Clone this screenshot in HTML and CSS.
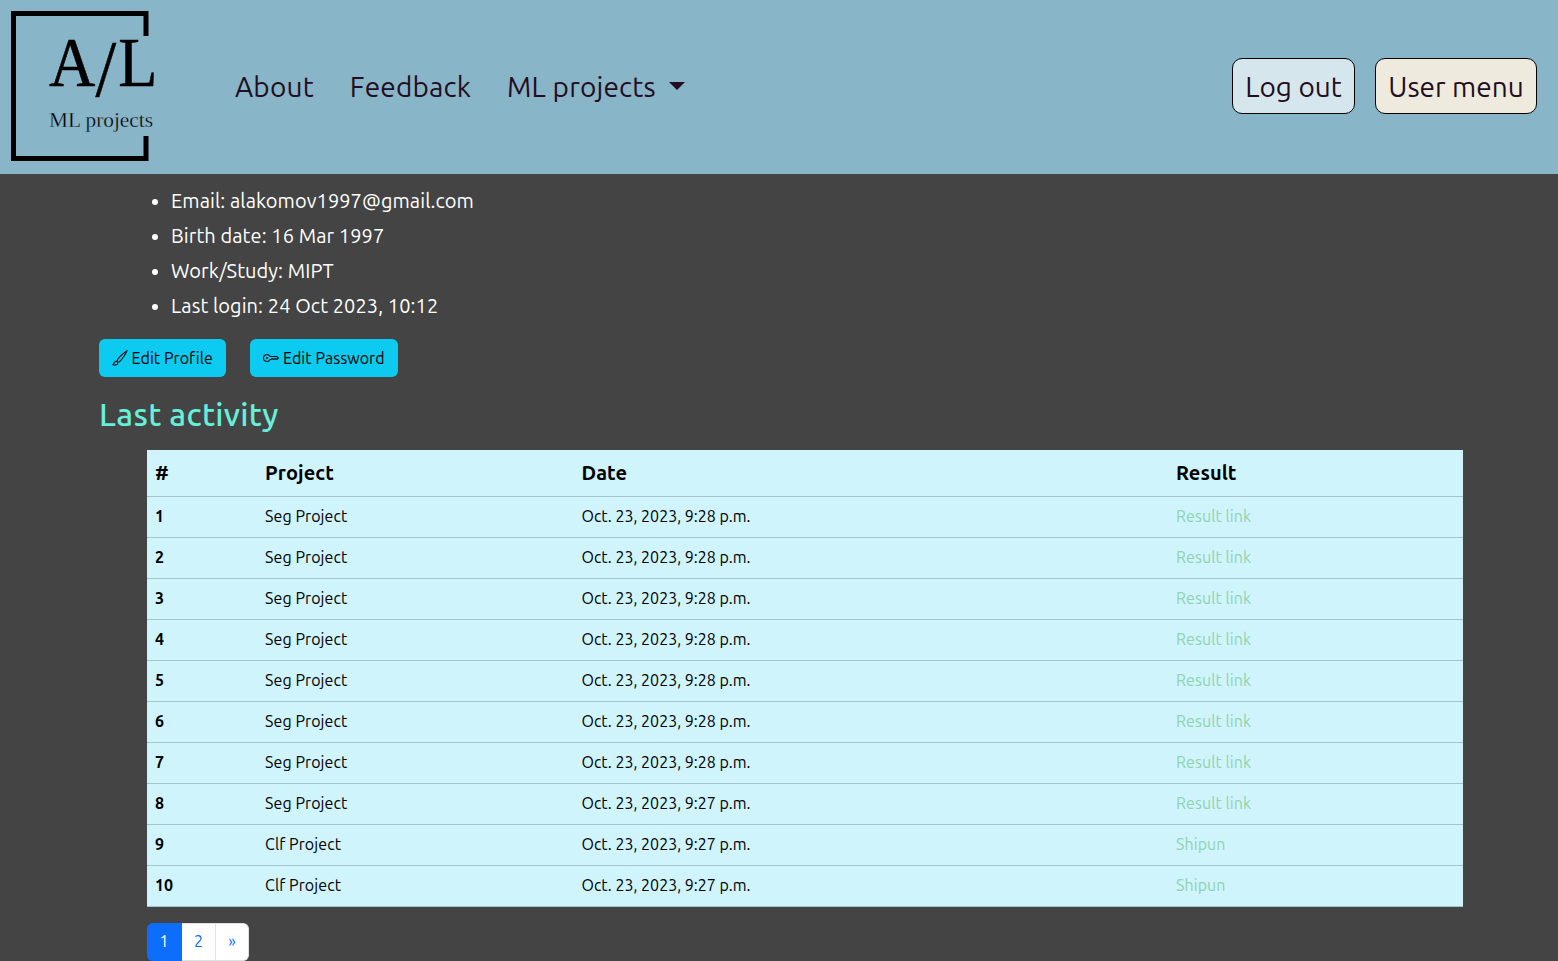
FILE: index.html
```html
<!DOCTYPE html>
<html lang="en">
<head>
<meta charset="utf-8">
<title>ML projects</title>
<link rel="stylesheet" href="styles.css">
</head>
<body>
<header class="navbar">
  <svg class="logo" width="160" height="174" viewBox="0 0 160 174">
    <path d="M146 36V13.500H13.500V158.500H146V136" fill="none" stroke="#000" stroke-width="5"/>
    <text class="logo-title" transform="translate(49 86) scale(.93 1)">A<tspan class="logo-slash" x="50" dy="10">/</tspan><tspan x="74.500" dy="-10">L</tspan></text>
    <text class="logo-sub" x="49" y="127" textLength="104" lengthAdjust="spacingAndGlyphs">ML projects</text>
  </svg>
  <nav class="links">
    <a>About</a>
    <a>Feedback</a>
    <a>ML projects<span class="caret"></span></a>
  </nav>
  <div class="account">
    <a class="acc logout">Log out</a>
    <a class="acc user">User menu</a>
  </div>
</header>
<main class="content">
  <ul class="info">
    <li>Email: alakomov1997@gmail.com</li>
    <li>Birth date: 16 Mar 1997</li>
    <li>Work/Study: MIPT</li>
    <li>Last login: 24 Oct 2023, 10:12</li>
  </ul>
  <div class="actions">
    <a class="btn profile"><svg width="16" height="16" viewBox="0 0 16 16" fill="currentColor"><path d="M15.825.12a.5.5 0 0 1 .132.584c-1.53 3.430-4.743 8.170-7.095 10.640a6.100 6.100 0 0 1-2.373 1.534c-.018.227-.06.538-.16.868-.201.659-.667 1.479-1.708 1.740a8.100 8.100 0 0 1-3.078.132 4 4 0 0 1-.562-.135 1.400 1.400 0 0 1-.466-.247.700.700 0 0 1-.204-.288.620.620 0 0 1 .004-.443c.095-.245.316-.38.461-.452.394-.197.625-.453.867-.826.095-.144.184-.297.287-.472l.117-.198c.151-.255.326-.54.546-.848.528-.739 1.201-.925 1.746-.896q.19.012.348.048c.062-.172.142-.38.238-.608.261-.619.658-1.419 1.187-2.069 2.176-2.670 6.180-6.206 9.117-8.104a.5.5 0 0 1 .596.040M4.705 11.912a1.200 1.200 0 0 0-.419-.1c-.246-.013-.573.050-.879.479-.197.275-.355.532-.5.777l-.105.177c-.106.181-.213.362-.32.528a3.400 3.400 0 0 1-.76.861c.69.112 1.736.111 2.657-.12.559-.139.843-.569.993-1.060a3 3 0 0 0 .126-.75zm1.440.026c.12-.04.277-.1.458-.183a5.100 5.100 0 0 0 1.535-1.100c1.900-1.996 4.412-5.570 6.052-8.631-2.590 1.927-5.566 4.660-7.302 6.792-.442.543-.795 1.243-1.042 1.826-.121.288-.214.540-.275.720v.001l.575.575zm-4.973 3.040.007-.005zm3.582-3.043.002.001h-.002z"/></svg><span>Edit Profile</span></a>
    <a class="btn password"><svg width="16" height="16" viewBox="0 0 16 16" fill="currentColor"><path d="M0 8a4 4 0 0 1 7.465-2H14a.5.5 0 0 1 .354.146l1.500 1.500a.5.5 0 0 1 0 .708l-1.500 1.500a.5.5 0 0 1-.708 0L13 9.207l-.646.647a.5.5 0 0 1-.708 0L11 9.207l-.646.647a.5.5 0 0 1-.708 0L9 9.207l-.646.647A.5.5 0 0 1 8 10h-.535A4 4 0 0 1 0 8m4-3a3 3 0 1 0 2.712 4.285A.5.5 0 0 1 7.163 9h.63l.853-.854a.5.5 0 0 1 .708 0l.646.647.646-.647a.5.5 0 0 1 .708 0l.646.647.646-.647a.5.5 0 0 1 .708 0l.646.647.793-.793-1-1h-6.630a.5.5 0 0 1-.451-.285A3 3 0 0 0 4 5"/><circle cx="4" cy="8" r="1"/></svg><span>Edit Password</span></a>
  </div>
  <h2 class="heading">Last activity</h2>
  <table class="activity">
    <thead><tr><th class="c-num">#</th><th class="c-project">Project</th><th class="c-date">Date</th><th>Result</th></tr></thead>
    <tbody>
      <tr><th>1</th><td>Seg Project</td><td class="date">Oct. 23, 2023, 9:28 p.m.</td><td><a>Result link</a></td></tr>
      <tr><th>2</th><td>Seg Project</td><td class="date">Oct. 23, 2023, 9:28 p.m.</td><td><a>Result link</a></td></tr>
      <tr><th>3</th><td>Seg Project</td><td class="date">Oct. 23, 2023, 9:28 p.m.</td><td><a>Result link</a></td></tr>
      <tr><th>4</th><td>Seg Project</td><td class="date">Oct. 23, 2023, 9:28 p.m.</td><td><a>Result link</a></td></tr>
      <tr><th>5</th><td>Seg Project</td><td class="date">Oct. 23, 2023, 9:28 p.m.</td><td><a>Result link</a></td></tr>
      <tr><th>6</th><td>Seg Project</td><td class="date">Oct. 23, 2023, 9:28 p.m.</td><td><a>Result link</a></td></tr>
      <tr><th>7</th><td>Seg Project</td><td class="date">Oct. 23, 2023, 9:28 p.m.</td><td><a>Result link</a></td></tr>
      <tr><th>8</th><td>Seg Project</td><td class="date">Oct. 23, 2023, 9:27 p.m.</td><td><a>Result link</a></td></tr>
      <tr><th>9</th><td>Clf Project</td><td class="date">Oct. 23, 2023, 9:27 p.m.</td><td><a>Shipun</a></td></tr>
      <tr><th>10</th><td>Clf Project</td><td class="date">Oct. 23, 2023, 9:27 p.m.</td><td><a>Shipun</a></td></tr>
    </tbody>
  </table>
  <div class="pagination"><a class="page active">1</a><a class="page">2</a><a class="page last">»</a></div>
</main>
</body>
</html>
```
FILE: styles.css
```css
* { box-sizing: border-box; }
body {
  margin: 0;
  height: 961px;
  overflow: hidden;
  background: #444;
  color: #fff;
  font-family: Ubuntu, "Noto Sans", sans-serif;
  font-size: 16px;
  line-height: 24px;
}
.navbar {
  display: flex;
  align-items: center;
  height: 174px;
  padding-right: 21px;
  background: #88b5c8;
  color: #230d21;
  font-size: 28px;
  line-height: 42px;
}
.logo { flex: none; }
.logo-title {
  font-family: "Liberation Serif", serif;
  font-size: 69px;
  stroke: #000;
  stroke-width: 0.5px;
}
.logo-slash { font-size: 80px; }
.logo-sub {
  font-family: "Liberation Serif", serif;
  font-size: 22px;
  stroke: #88b5c8;
  stroke-width: 0.35px;
}
.links { display: flex; gap: 36px; margin-left: 75px; letter-spacing: 0.17px; }
.links a { white-space: nowrap; }
.caret {
  display: inline-block;
  margin-left: 13px;
  vertical-align: 7px;
  border-top: 8px solid;
  border-left: 8px solid transparent;
  border-right: 8px solid transparent;
}
.account { display: flex; gap: 20px; margin: 0 0 2px auto; }
.acc {
  height: 56px;
  padding: 7px 0 5px;
  border: 1px solid #000;
  border-radius: 10px;
  text-align: center;
  white-space: nowrap;
}
.logout { width: 123px; background: #d6e6ed; }
.user { width: 162px; background: #eeebde; }
.content { padding: 9px 95px 0 99px; }
.info {
  margin: 0;
  padding-left: 72px;
  font-size: 20px;
  line-height: 35px;
  letter-spacing: 0.08px;
}
.actions { display: flex; gap: 24px; margin-top: 16px; letter-spacing: 0.07px; }
.btn {
  display: flex;
  align-items: center;
  gap: 4px;
  height: 38px;
  padding: 0 13px;
  border-radius: 6px;
  background: #0dcaf0;
  color: #000;
  white-space: nowrap;
}
.profile { width: 127px; }
.password { width: 148px; }
.heading {
  margin: 18px 0 0;
  color: #66f0da;
  font-size: 32px;
  font-weight: 500;
  line-height: 38px;
  letter-spacing: 0.28px;
}
.activity {
  width: 1316px;
  margin: 17px 0 0 48px;
  border-collapse: separate;
  border-spacing: 0;
  table-layout: fixed;
  background: #cff4fc;
  color: #000;
  text-align: left;
  letter-spacing: 0.08px;
}
.activity th, .activity td {
  height: 41px;
  padding: 7px 8px 9px;
  border-bottom: 1px solid #a6c3ca;
  line-height: 24px;
}
.activity thead th { height: 47px; padding: 8px; font-size: 20px; line-height: 30px; }
.activity .date { letter-spacing: 0; }
.c-num { width: 110px; }
.c-project { width: 316.5px; }
.c-date { width: 594.5px; }
.activity a { color: #8fd3b0; }
.pagination { display: flex; margin: 16px 0 0 48px; }
.page {
  width: 34px;
  height: 38px;
  padding: 5px 0;
  border: 1px solid #dee2e6;
  border-left: 0;
  background: #fff;
  color: #0d6efd;
  text-align: center;
}
.active { width: 35px; border-color: #0d6efd; border-radius: 6px 0 0 6px; background: #0d6efd; color: #fff; }
.last { width: 33px; border-radius: 0 6px 6px 0; }
```
